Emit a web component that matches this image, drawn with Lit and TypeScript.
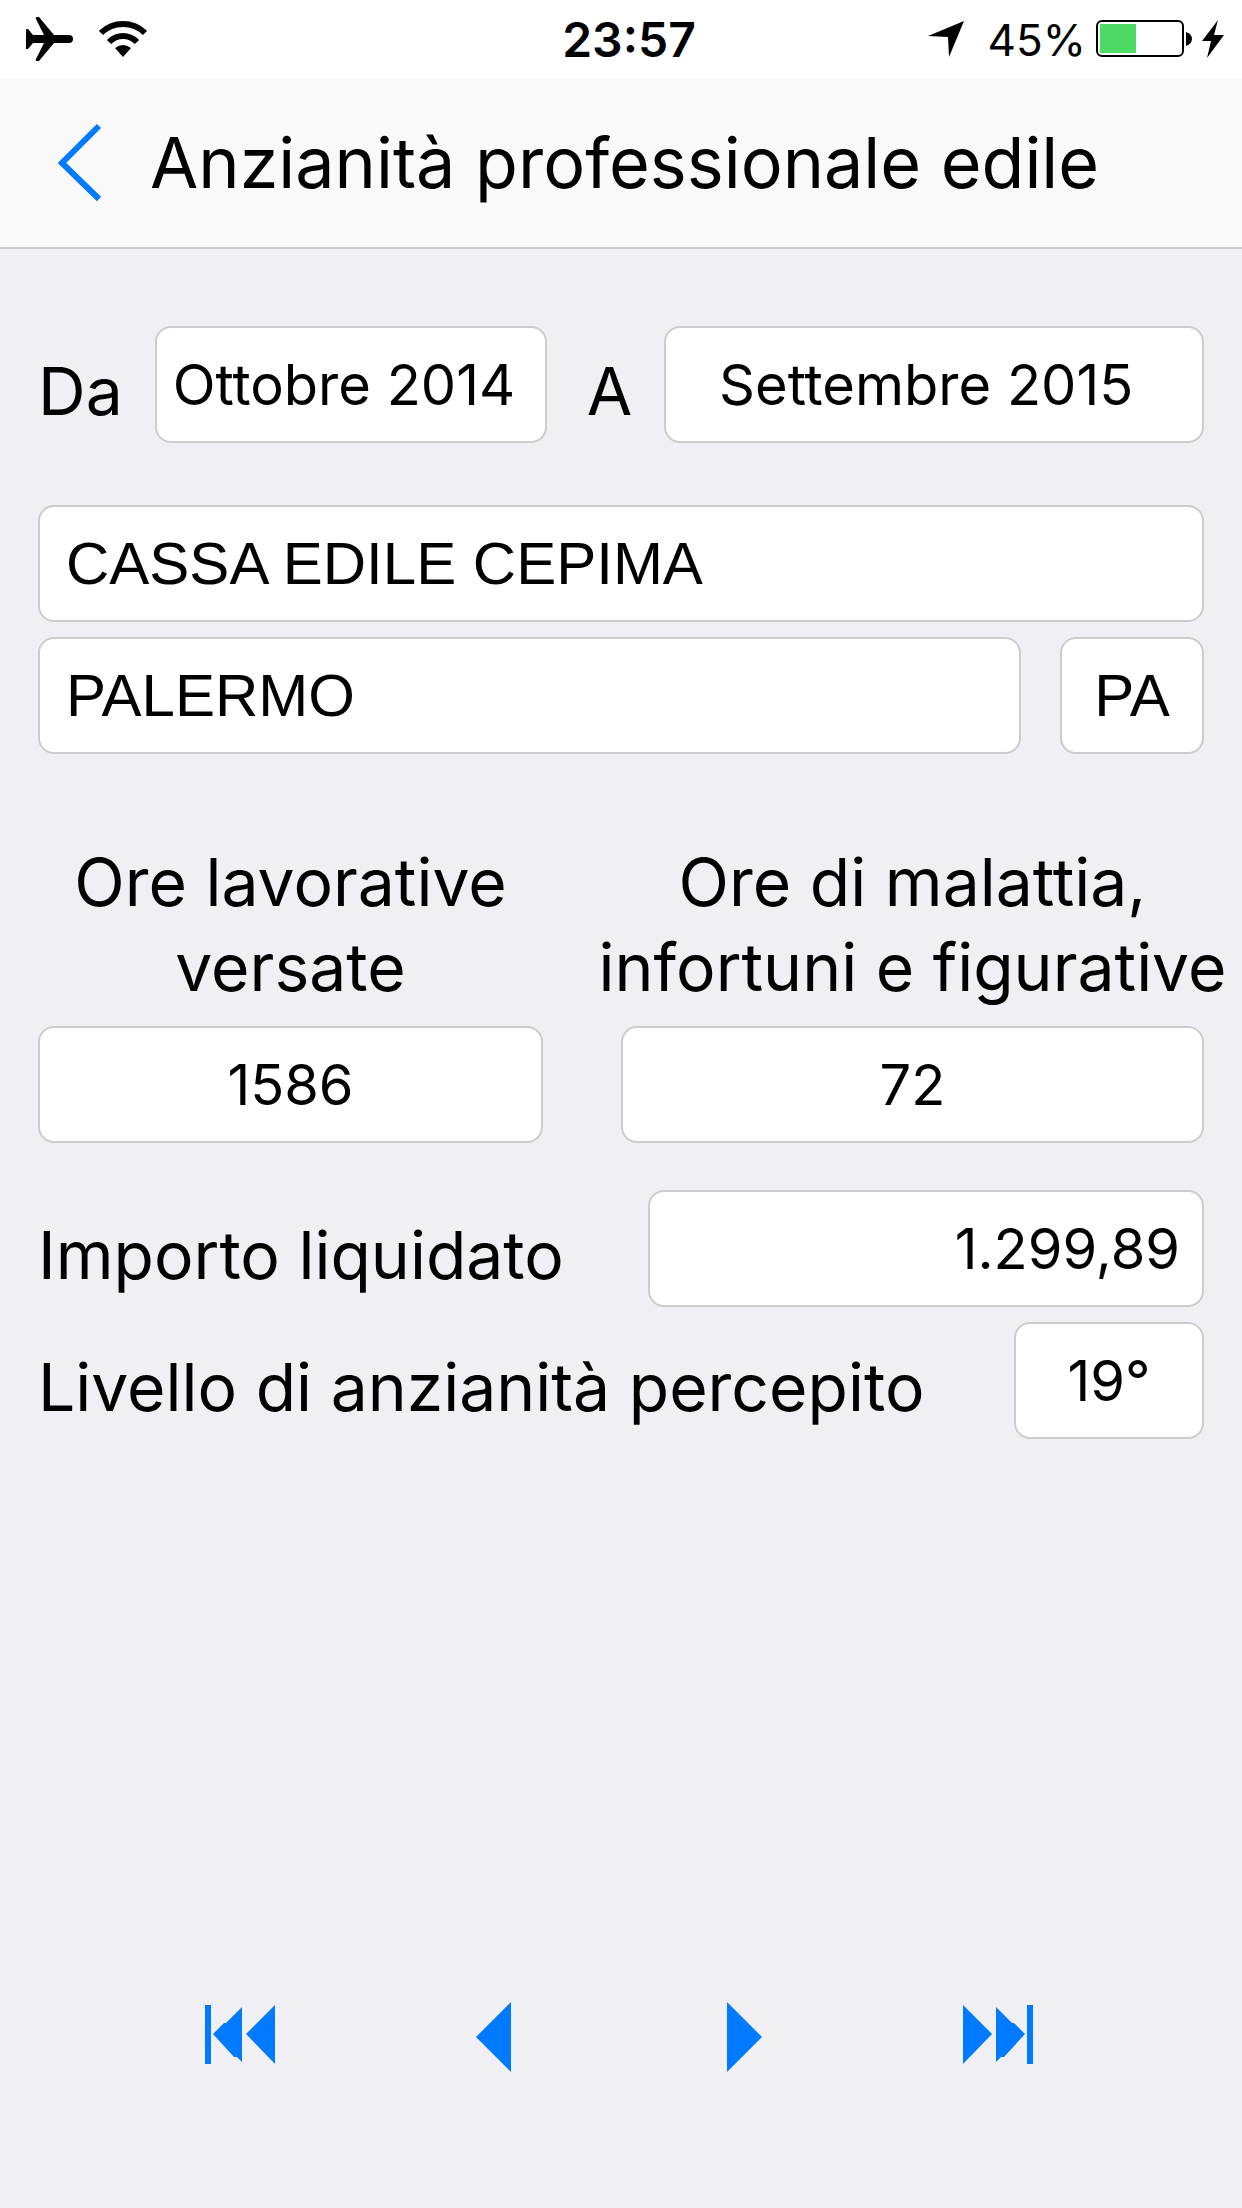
import { LitElement, html, css, svg } from "lit";
import { customElement, property } from "lit/decorators.js";

@customElement("status-bar")
class StatusBar extends LitElement {
  @property({ type: Number }) battery = 45;

  static styles = css`
    :host {
      display: grid;
      grid-template-columns: 1fr auto 1fr;
      align-items: center;
      height: 78px;
      padding: 0 10px 0 26px;
      box-sizing: border-box;
      background: #fff;
      color: #000;
      font-family: Inter, "Liberation Sans", sans-serif;
      font-size: 48px;
      line-height: 58px;
    }
    svg {
      display: block;
      flex: none;
    }
    .group {
      display: flex;
      align-items: center;
    }
    .left {
      gap: 26px;
    }
    .right {
      justify-content: flex-end;
      gap: 10px;
    }
    .time {
      padding-top: 2px;
      font-weight: 600;
    }
    .percent {
      padding: 2px 0 0 14px;
      font-size: 44px;
    }
  `;

  render() {
    const level = Math.round((80 * this.battery) / 100);
    return html`
      <div class="group left">
        <svg width="47" height="44" viewBox="0 0 47 44" aria-label="Uso in aereo" role="img">
          <path d="M0 12h2l5 6h11L10 2q-1-2 1-2h2l15 18h15q4 0 4 4t-4 4H28L13 44h-2q-2 0-1-2l8-16H7l-5 6H0z" />
        </svg>
        <svg width="48" height="36" viewBox="0 0 48 36" aria-label="Wi-Fi" role="img">
          <g fill="none" stroke="#000" stroke-width="6">
            <path d="M2 12Q11 3 24 3T46 12" />
            <path d="M10 21Q16 15 24 15T38 21" />
          </g>
          <path d="M16 27Q24 21 32 27L24 36z" />
        </svg>
      </div>
      <div class="time">23:57</div>
      <div class="group right">
        <svg width="36" height="36" viewBox="0 0 36 36" aria-label="Posizione" role="img">
          <path d="M36 0L21 36L20 16L0 15z" />
        </svg>
        <span class="percent">${this.battery}%</span>
        <svg width="96" height="38" viewBox="0 0 96 38" aria-hidden="true">
          <rect x="1" y="1" width="86" height="35" rx="5" fill="#fff" stroke="#000" stroke-width="2" />
          <rect x="4" y="4" width=${level} height="29" fill="#4cd964" />
          <path d="M90 12q6 2 6 7t-6 7z" />
        </svg>
        <svg width="30" height="38" viewBox="0 0 30 38" aria-label="In carica" role="img">
          <path d="M16 0L0 21H9L5 38L22 15H12z" />
        </svg>
      </div>
    `;
  }
}

@customElement("record-nav")
class RecordNav extends LitElement {
  static styles = css`
    :host {
      display: block;
      padding: 0 118px 136px 114px;
    }
    nav {
      display: grid;
      grid-template-columns: repeat(4, 1fr);
      justify-items: center;
    }
    button {
      padding: 0;
      border: 0;
      background: none;
      color: #007aff;
    }
    svg {
      display: block;
      fill: currentColor;
    }
  `;

  private icons = [
    {
      label: "Primo",
      shape: svg`<path d="M0 3h6v59H0zM37 5v55l-5-5h-3L8 32l11-11h2zM70 3v59L41 32z" />`,
    },
    { label: "Precedente", shape: svg`<path d="M53 0v70L18 35z" />` },
    { label: "Successivo", shape: svg`<path d="M17 0v70L52 35z" />` },
    {
      label: "Ultimo",
      shape: svg`<path d="M64 3h6v59h-6zM33 5v55l5-5h3L62 32L51 21h-2zM0 3v59L29 32z" />`,
    },
  ];

  render() {
    return html`<nav>
      ${this.icons.map(
        (icon) => html`<button type="button" aria-label=${icon.label}>
          <svg width="70" height="70" viewBox="0 0 70 70">${icon.shape}</svg>
        </button>`
      )}
    </nav>`;
  }
}

@customElement("app-root")
class AppRoot extends LitElement {
  static styles = css`
    :host {
      display: flex;
      flex-direction: column;
      min-height: 100vh;
      background: #efeff4;
      color: #000;
      font-family: Inter, "Liberation Sans", sans-serif;
      font-size: 66px;
      line-height: 85px;
    }
    .header {
      display: flex;
      align-items: center;
      gap: 48px;
      height: 171px;
      padding: 0 56px;
      box-sizing: border-box;
      background: #f9f9f9;
      border-bottom: 2px solid #c8c7cc;
    }
    .back {
      padding: 0;
      border: 0;
      background: none;
      color: #007aff;
    }
    .back svg {
      display: block;
    }
    h1 {
      margin: 0;
      font-size: 70px;
      font-weight: 400;
      line-height: 85px;
      white-space: nowrap;
    }
    form {
      display: flex;
      flex-direction: column;
      gap: 15px;
      padding: 77px 38px 0;
    }
    .row {
      display: flex;
      align-items: center;
    }
    .period {
      margin-bottom: 47px;
    }
    label {
      white-space: nowrap;
    }
    .beside {
      padding-top: 14px;
    }
    .gap-m {
      gap: 39px;
    }
    input {
      min-width: 0;
      width: 100%;
      height: 117px;
      box-sizing: border-box;
      padding: 0 26px;
      border: 2px solid #ccc;
      border-radius: 16px;
      background: #fff;
      color: #000;
      font-family: inherit;
      font-size: 56px;
      text-align: center;
    }
    .from {
      width: 392px;
      padding: 0 32px 0 16px;
      margin: 0 40px 0 32px;
    }
    .to {
      flex: 1;
      padding: 0 42px 0 26px;
      margin-left: 32px;
    }
    .place {
      font-family: "Liberation Sans", Arial, sans-serif;
      font-size: 60px;
      text-align: left;
    }
    .town {
      flex: 1;
    }
    .prov {
      width: 144px;
      padding: 0;
      text-align: center;
    }
    .hours {
      display: grid;
      grid-template-columns: 505fr 583fr;
      gap: 78px;
      margin: 71px 0 32px;
    }
    .column {
      display: flex;
      flex-direction: column;
      align-items: center;
      gap: 16px;
      min-width: 0;
      text-align: center;
    }
    .amount-row,
    .level-row {
      justify-content: space-between;
    }
    .amount {
      width: 556px;
      padding: 0 22px;
      text-align: right;
    }
    .level {
      width: 190px;
    }
    record-nav {
      margin-top: auto;
    }
  `;

  render() {
    return html`
      <status-bar></status-bar>
      <header class="header">
        <button class="back" type="button" aria-label="Indietro">
          <svg width="46" height="82" viewBox="0 0 46 82">
            <path d="M43 4L6 41L43 77" fill="none" stroke="currentColor" stroke-width="6" />
          </svg>
        </button>
        <h1>Anzianità professionale edile</h1>
      </header>
      <form @submit=${(e: Event) => e.preventDefault()}>
        <div class="row period">
          <label class="beside" for="from">Da</label>
          <input class="from" id="from" type="text" value="Ottobre 2014" />
          <label class="beside" for="to">A</label>
          <input class="to" id="to" type="text" value="Settembre 2015" />
        </div>
        <input class="place" type="text" aria-label="Cassa edile" value="CASSA EDILE CEPIMA" />
        <div class="row gap-m">
          <input class="place town" type="text" aria-label="Città" value="PALERMO" />
          <input class="place prov" type="text" aria-label="Provincia" value="PA" />
        </div>
        <div class="hours">
          <div class="column">
            <label for="worked">Ore lavorative<br />versate</label>
            <input id="worked" type="text" value="1586" />
          </div>
          <div class="column">
            <label for="sick">Ore di malattia,<br />infortuni e figurative</label>
            <input id="sick" type="text" value="72" />
          </div>
        </div>
        <div class="row amount-row">
          <label class="beside" for="amount">Importo liquidato</label>
          <input class="amount" id="amount" type="text" value="1.299,89" />
        </div>
        <div class="row level-row">
          <label class="beside" for="level">Livello di anzianità percepito</label>
          <input class="level" id="level" type="text" value="19°" />
        </div>
      </form>
      <record-nav></record-nav>
    `;
  }
}
